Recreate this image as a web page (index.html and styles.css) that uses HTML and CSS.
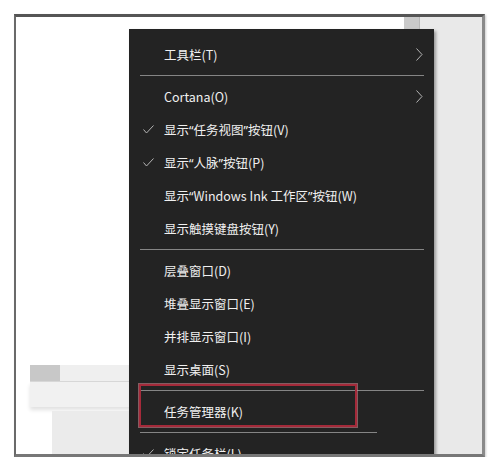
FILE: index.html
```html
<!DOCTYPE html>
<html lang="zh-CN">

<head>
    <meta charset="UTF-8">
    <title>任务栏右键菜单</title>
    <link rel="stylesheet" href="styles.css">
</head>

<body>

    <div class="screen">

        <!-- Desktop behind the menu -->
        <div class="desk">
            <div class="pane">
                <div class="bar">
                    <div class="bar-top">
                        <div class="bar-btn"></div>
                        <div class="bar-rest"></div>
                    </div>
                    <div class="bar-body"></div>
                </div>
                <div class="bar-floor"></div>
            </div>
            <div class="strip"></div>
            <div class="side"></div>
        </div>

        <!-- Context Menu -->
        <div class="menu">
            <div class="item">
                <span class="label">工具栏(T)</span>
                <svg class="arrow" width="7" height="13" viewBox="0 0 7 13"><polyline points="0.5,0.5 6,6.5 0.5,12.5" /></svg>
            </div>
            <div class="sep"></div>
            <div class="item">
                <span class="label">Cortana(O)</span>
                <svg class="arrow" width="7" height="13" viewBox="0 0 7 13"><polyline points="0.5,0.5 6,6.5 0.5,12.5" /></svg>
            </div>
            <div class="item">
                <svg class="check" width="11" height="9" viewBox="0 0 11 9"><polyline points="0.5,4.5 3.5,8 10.5,0.5" /></svg>
                <span class="label">显示<span class="q">“</span>任务视图<span class="q">”</span>按钮(V)</span>
            </div>
            <div class="item">
                <svg class="check" width="11" height="9" viewBox="0 0 11 9"><polyline points="0.5,4.5 3.5,8 10.5,0.5" /></svg>
                <span class="label">显示<span class="q">“</span>人脉<span class="q">”</span>按钮(P)</span>
            </div>
            <div class="item"><span class="label">显示<span class="q">“</span>Windows Ink 工作区<span class="q">”</span>按钮(W)</span></div>
            <div class="item"><span class="label">显示触摸键盘按钮(Y)</span></div>
            <div class="sep"></div>
            <div class="item"><span class="label">层叠窗口(D)</span></div>
            <div class="item"><span class="label">堆叠显示窗口(E)</span></div>
            <div class="item"><span class="label">并排显示窗口(I)</span></div>
            <div class="item"><span class="label">显示桌面(S)</span></div>
            <div class="sep"></div>
            <div class="item"><span class="label">任务管理器(K)</span></div>
            <div class="sep short"></div>
            <div class="item">
                <svg class="check" width="11" height="9" viewBox="0 0 11 9"><polyline points="0.5,4.5 3.5,8 10.5,0.5" /></svg>
                <span class="label">锁定任务栏(L)</span>
            </div>

            <!-- Highlight box -->
            <div class="mark"></div>
        </div>

    </div>

</body>

</html>
```

FILE: styles.css
```css
body {
    margin: 0;
    background: white;
    font-family: "Noto Sans CJK SC", "Noto Sans", sans-serif;
}

.screen {
    position: relative;
    width: 471px;
    height: 443px;
    margin: 14px 0 0 14px;
    box-sizing: border-box;
    border-style: solid;
    border-width: 3px 3px 3px 2px;
    border-color: #555 #8a8a8a #777 #6a6a6a;
    box-shadow: 1px 1px 2px rgba(0, 0, 0, 0.2);
    overflow: hidden;
}

.desk {
    display: flex;
    height: 100%;
}

.pane {
    width: 388px;
    padding: 348px 0 0 14px;
    box-sizing: border-box;
    display: flex;
    flex-direction: column;
    background: white;
}

.bar-top {
    display: flex;
    height: 16px;
    border-bottom: 1px solid #d8d8d8;
}

.bar-btn {
    width: 30px;
    background: #c8c8c8;
}

.bar-rest {
    flex: 1;
    background: #efefef;
}

.bar-body {
    height: 25px;
    background: #f1f1f1;
    box-shadow: 0 3px 4px rgba(0, 0, 0, 0.12);
}

.bar-floor {
    flex: 1;
    margin: 4px 0 0 22px;
    background: #ebebeb;
}

.strip {
    width: 16px;
    background: #cacaca;
    border-right: 1px solid #b8b8b8;
    box-sizing: border-box;
}

.side {
    flex: 1;
    background: #e9e9e9;
}

.menu {
    position: absolute;
    left: 113px;
    top: 12px;
    width: 305px;
    height: 426px;
    padding-top: 9px;
    box-sizing: border-box;
    background: #232323;
    color: #f0f0f0;
    font-size: 12.5px;
    box-shadow: 2px 2px 3px rgba(0, 0, 0, 0.35);
    overflow: hidden;
}

.item {
    position: relative;
    display: flex;
    align-items: center;
    height: 33px;
    padding-left: 35px;
    white-space: nowrap;
}

.q {
    font-family: "Noto Sans", sans-serif;
}

.check {
    position: absolute;
    left: 14px;
    top: 12px;
}

.arrow {
    position: absolute;
    right: 11px;
    top: 10px;
}

.check polyline,
.arrow polyline {
    fill: none;
    stroke: #b4b4b4;
    stroke-width: 1;
}

.sep {
    height: 1px;
    margin: 4px 10px 4px 11px;
    background: #858585;
}

.sep.short {
    margin-right: 57px;
}

.mark {
    position: absolute;
    left: 10px;
    top: 355px;
    width: 218px;
    height: 43px;
    box-sizing: border-box;
    border: 2px solid #a52a3a;
    box-shadow: 0 0 0 1px rgba(214, 140, 150, 0.55);
}
```
